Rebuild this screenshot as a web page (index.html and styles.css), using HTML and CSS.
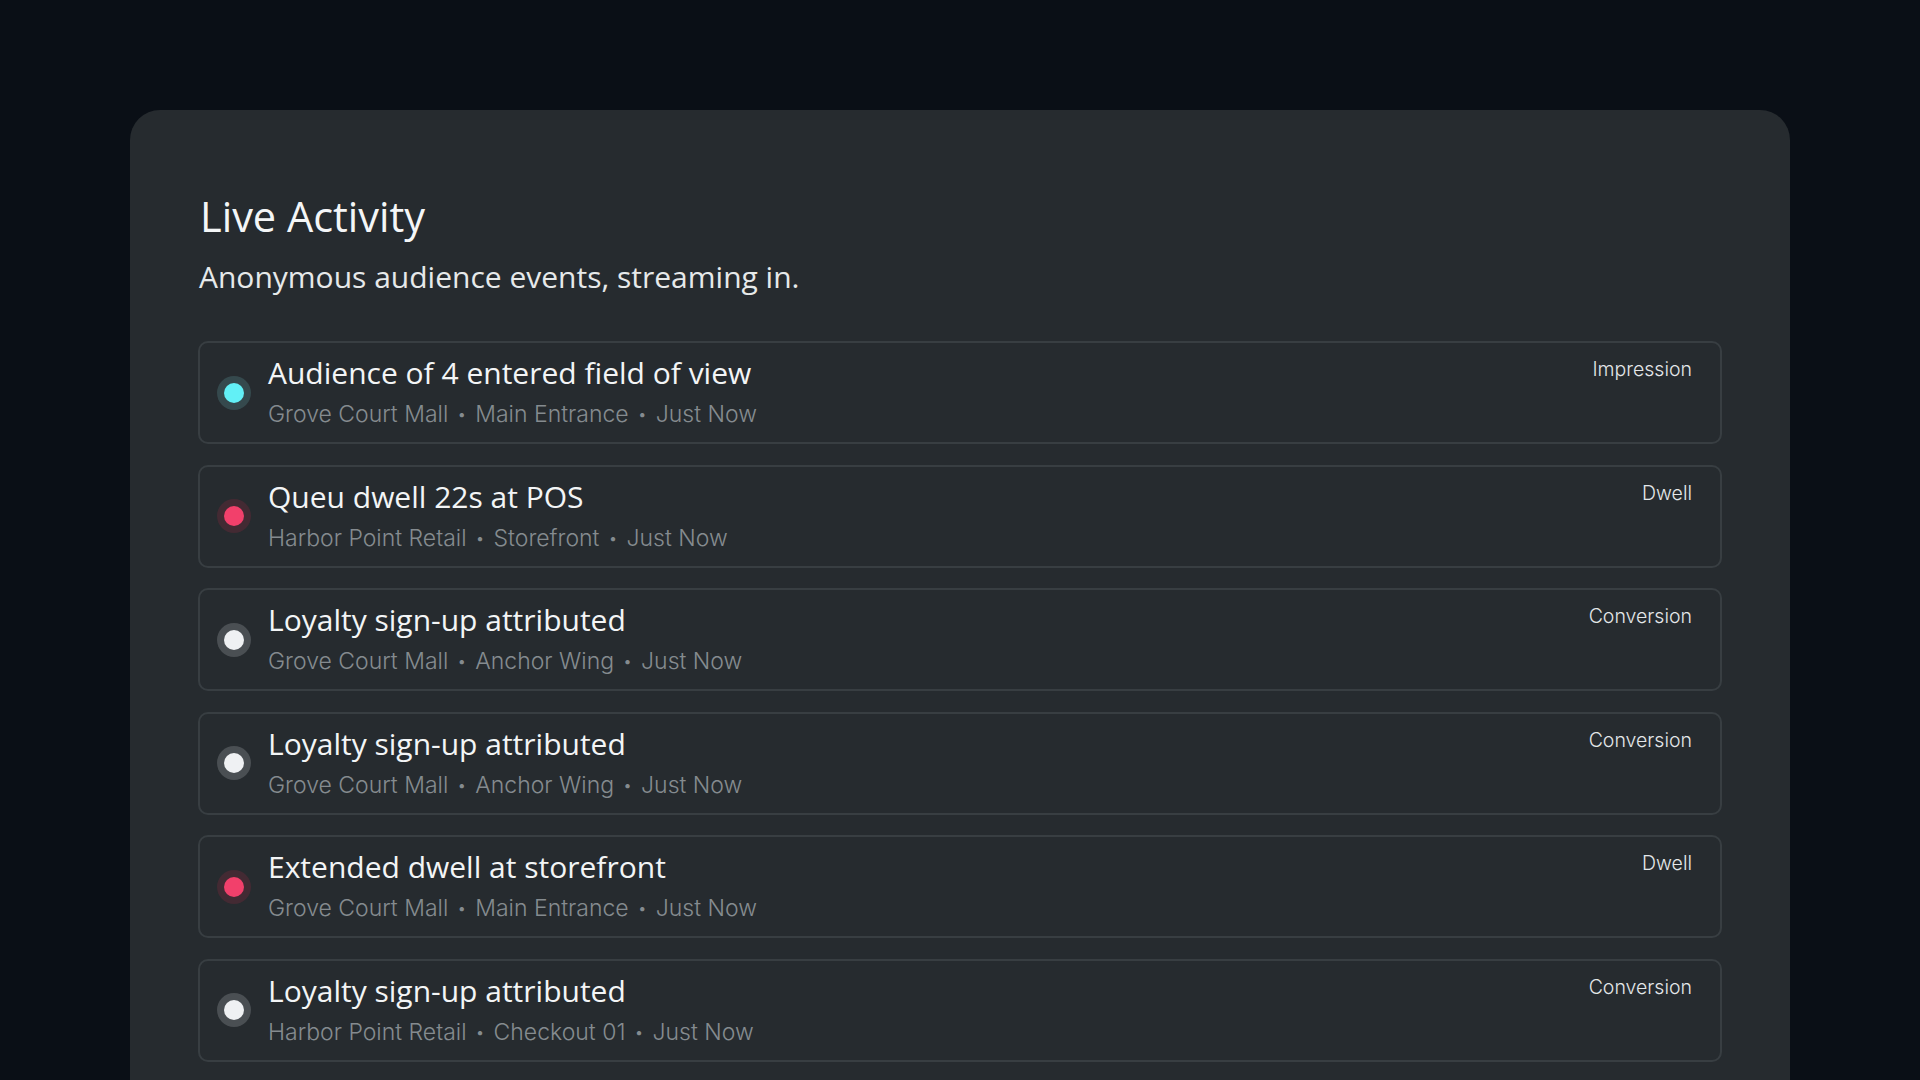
FILE: index.html
```html
<!DOCTYPE html>
<html lang="en">
<head>
    <meta charset="UTF-8">
    <meta name="viewport" content="width=device-width, initial-scale=1.0">
    <title>Live Activity</title>
    <link rel="stylesheet" href="styles.css">
</head>
<body>

    <div class="panel">
        <!-- Header -->
        <h1>Live Activity</h1>
        <p class="lead">Anonymous audience events, streaming in.</p>

        <!-- Event feed -->
        <div class="feed">
            <div class="event">
                <span class="dot dot-cyan"></span>
                <div class="event-body">
                    <div class="event-title">Audience of 4 entered field of view</div>
                    <div class="event-meta">Grove Court Mall<span class="sep">•</span>Main Entrance<span class="sep">•</span>Just Now</div>
                </div>
                <span class="tag">Impression</span>
            </div>

            <div class="event">
                <span class="dot dot-red"></span>
                <div class="event-body">
                    <div class="event-title">Queu dwell 22s at POS</div>
                    <div class="event-meta">Harbor Point Retail<span class="sep">•</span>Storefront<span class="sep">•</span>Just Now</div>
                </div>
                <span class="tag">Dwell</span>
            </div>

            <div class="event">
                <span class="dot dot-white"></span>
                <div class="event-body">
                    <div class="event-title">Loyalty sign-up attributed</div>
                    <div class="event-meta">Grove Court Mall<span class="sep">•</span>Anchor Wing<span class="sep">•</span>Just Now</div>
                </div>
                <span class="tag">Conversion</span>
            </div>

            <div class="event">
                <span class="dot dot-white"></span>
                <div class="event-body">
                    <div class="event-title">Loyalty sign-up attributed</div>
                    <div class="event-meta">Grove Court Mall<span class="sep">•</span>Anchor Wing<span class="sep">•</span>Just Now</div>
                </div>
                <span class="tag">Conversion</span>
            </div>

            <div class="event">
                <span class="dot dot-red"></span>
                <div class="event-body">
                    <div class="event-title">Extended dwell at storefront</div>
                    <div class="event-meta">Grove Court Mall<span class="sep">•</span>Main Entrance<span class="sep">•</span>Just Now</div>
                </div>
                <span class="tag">Dwell</span>
            </div>

            <div class="event">
                <span class="dot dot-white"></span>
                <div class="event-body">
                    <div class="event-title">Loyalty sign-up attributed</div>
                    <div class="event-meta">Harbor Point Retail<span class="sep">•</span>Checkout 01<span class="sep">•</span>Just Now</div>
                </div>
                <span class="tag">Conversion</span>
            </div>
        </div>
    </div>

</body>
</html>
```

FILE: styles.css
```css
* {
    margin: 0;
    padding: 0;
    box-sizing: border-box;
}

body {
    background: #0a0f16;
    height: 100vh;
    overflow: hidden;
    font-family: "Open Sans", "Noto Sans", sans-serif;
    padding: 110px 130px 0 130px;
}

.panel {
    background: #262b2f;
    border-radius: 30px;
    padding: 78px 68px 70px 68px;
}

.panel h1 {
    font-size: 41.5px;
    font-weight: 400;
    color: #f4f6f7;
    line-height: 57px;
    padding-left: 2px;
}

.lead {
    font-size: 30px;
    color: #e6e9ea;
    margin-top: 12px;
    line-height: 40px;
    padding-left: 1px;
}

.feed {
    margin-top: 44px;
    display: flex;
    flex-direction: column;
    gap: 20.6px;
}

.event {
    height: 103px;
    border: 2px solid #383e42;
    border-radius: 10px;
    display: flex;
    align-items: center;
    padding: 0 28px 0 17px;
}

.dot {
    width: 20px;
    height: 20px;
    border-radius: 50%;
    flex-shrink: 0;
    margin: 0 24px 0 7px;
}

.dot-cyan {
    background: #62f0f6;
    box-shadow: 0 0 0 7px #35494d;
}

.dot-red {
    background: #f2406b;
    box-shadow: 0 0 0 7px #432a33;
}

.dot-white {
    background: #eff1f3;
    box-shadow: 0 0 0 7px #4a4f53;
}

.event-body {
    flex: 1;
    align-self: flex-start;
    margin-top: 11px;
    display: flex;
    flex-direction: column;
    gap: 9px;
}

.event-title {
    font-size: 30px;
    color: #f3f5f6;
    line-height: 38px;
}

.event-meta {
    font-family: Inter, "Noto Sans", sans-serif;
    font-weight: 300;
    font-size: 23px;
    color: #858b8f;
    line-height: 27px;
}

.sep {
    font-size: 16px;
    margin: 0 9px;
    position: relative;
    top: -2px;
}

.tag {
    align-self: flex-start;
    margin-top: 14px;
    font-family: Inter, "Noto Sans", sans-serif;
    font-weight: 300;
    font-size: 19.5px;
    color: #e4e7e9;
    line-height: 24px;
}
```
